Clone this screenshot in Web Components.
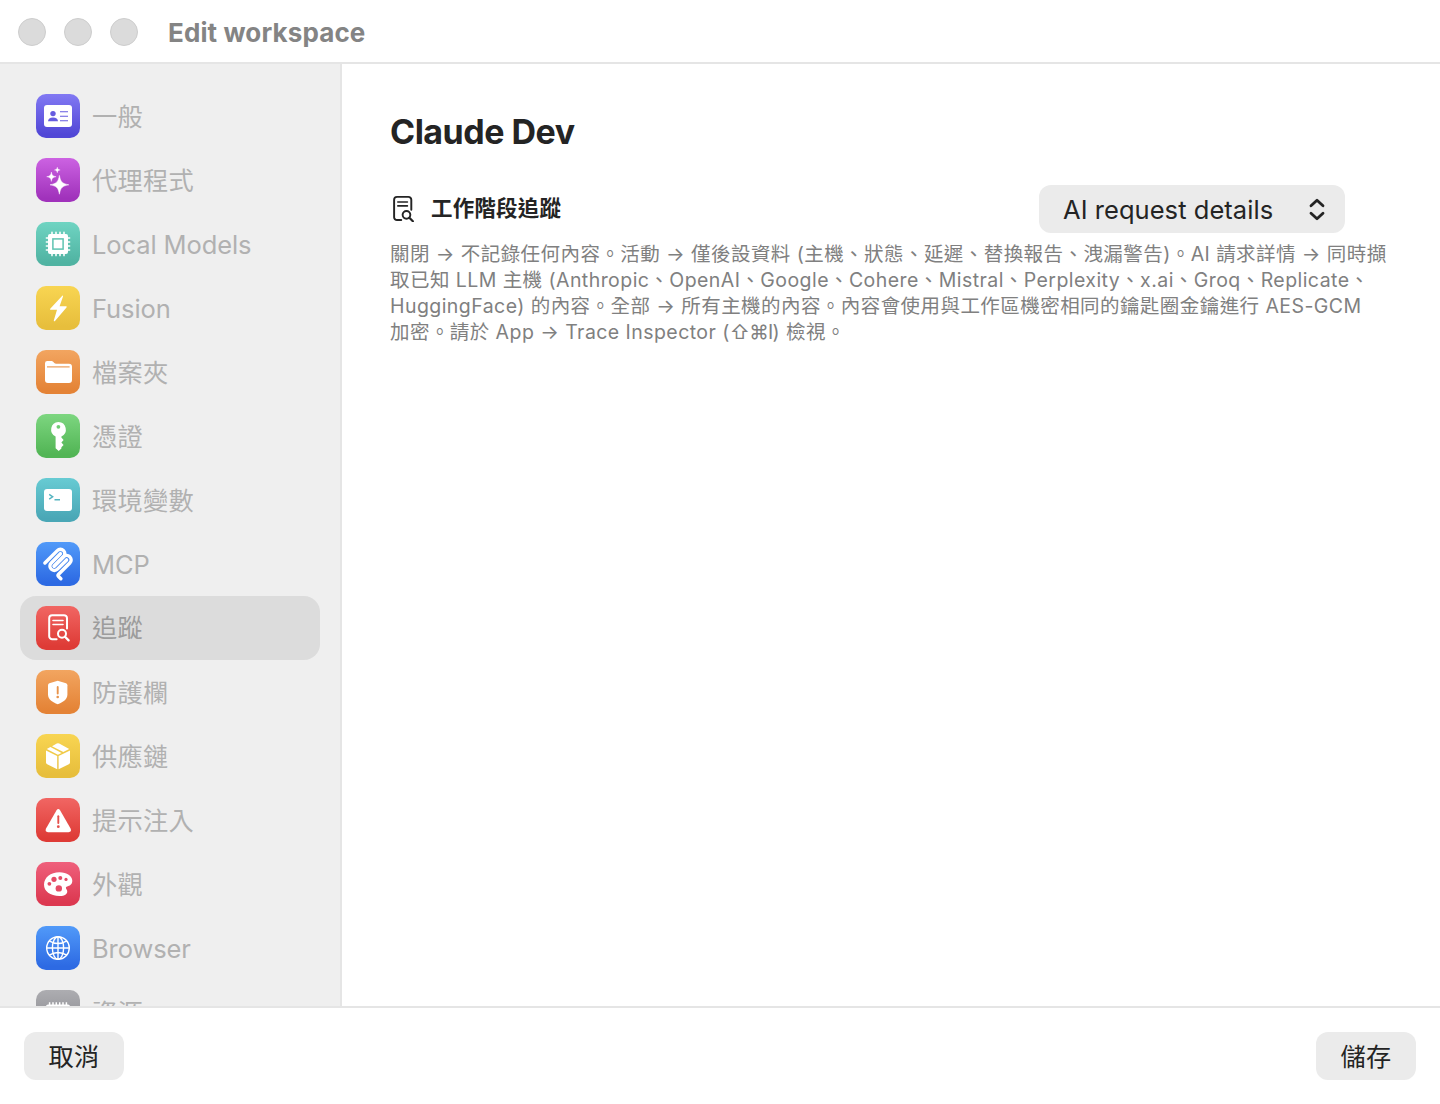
<!DOCTYPE html>
<html lang="zh-Hant">
<head>
<meta charset="utf-8">
<title>Edit workspace</title>
<style>
	html, body { margin: 0; height: 100%; }
	body {
		font-family: Inter, "Noto Sans CJK TC", sans-serif;
		background: #fff;
		overflow: hidden;
	}
	.keys { letter-spacing: -0.7px; }
</style>
</head>
<body>
<workspace-window caption="Edit workspace">
	<side-item slot="nav" icon="card" tint="indigo" cjk>一般</side-item>
	<side-item slot="nav" icon="sparkles" tint="purple" cjk>代理程式</side-item>
	<side-item slot="nav" icon="chip" tint="teal">Local Models</side-item>
	<side-item slot="nav" icon="bolt" tint="yellow">Fusion</side-item>
	<side-item slot="nav" icon="folder" tint="orange" cjk>檔案夾</side-item>
	<side-item slot="nav" icon="key" tint="green" cjk>憑證</side-item>
	<side-item slot="nav" icon="terminal" tint="cyan" cjk>環境變數</side-item>
	<side-item slot="nav" icon="mcp" tint="blue">MCP</side-item>
	<side-item slot="nav" icon="trace" tint="red" cjk selected>追蹤</side-item>
	<side-item slot="nav" icon="shield" tint="orange" cjk>防護欄</side-item>
	<side-item slot="nav" icon="box" tint="yellow" cjk>供應鏈</side-item>
	<side-item slot="nav" icon="warning" tint="red" cjk>提示注入</side-item>
	<side-item slot="nav" icon="palette" tint="pink" cjk>外觀</side-item>
	<side-item slot="nav" icon="globe" tint="blue">Browser</side-item>
	<side-item slot="nav" icon="memory" tint="gray" cjk>資源</side-item>

	<trace-pane name="Claude Dev">
		<span slot="title">工作階段追蹤</span>
		<popup-button slot="control">AI request details</popup-button>
		<help-line>關閉 → 不記錄任何內容。活動 → 僅後設資料 (主機、狀態、延遲、替換報告、洩漏警告)。AI 請求詳情 → 同時擷</help-line>
		<help-line>取已知 LLM 主機 (Anthropic、OpenAI、Google、Cohere、Mistral、Perplexity、x.ai、Groq、Replicate、</help-line>
		<help-line>HuggingFace) 的內容。全部 → 所有主機的內容。內容會使用與工作區機密相同的鑰匙圈金鑰進行 AES-GCM</help-line>
		<help-line>加密。請於 App → Trace Inspector (<span class="keys">⇧⌘I</span>) 檢視。</help-line>
	</trace-pane>

	<push-button slot="footer">取消</push-button>
	<push-button slot="footer">儲存</push-button>
</workspace-window>

<script>
// Glyphs are drawn on the 44px tile; "var(--hole)" is the tile colour showing through.
const TRACE = `
	<g fill="none" stroke="currentColor" stroke-width="2" stroke-linecap="round" stroke-linejoin="round">
		<path d="M20.6 33.2H16.2a3 3 0 0 1-3-3V12.2a3 3 0 0 1 3-3H28a3 3 0 0 1 3 3V22.6"/>
		<path d="M17 14.5H27M17 18.5H27" stroke-width="1.6"/>
		<circle cx="26" cy="27.8" r="4"/>
		<path d="M29 30.8L32.6 34.4" stroke-width="2.3"/>
	</g>`;

const ICONS = {
	card: `
		<rect x="8" y="11" width="28" height="22" rx="3"/>
		<g fill="var(--hole)">
			<circle cx="17" cy="19.6" r="2.7"/>
			<path d="M12 27.2C12 24.7 14 23.4 17 23.4S22 24.7 22 27.2Z"/>
			<path d="M24 17.2h8v1h-8zM24 21.7h8v1h-8zM24 26.2h8v1h-8z"/>
		</g>`,
	sparkles: `
		<path d="M23.4 17.4C24.6 24 26.2 25.5 32.8 26.8C26.2 28.1 24.6 29.6 23.4 36.2C22.2 29.6 20.6 28.1 14 26.8C20.6 25.5 22.2 24 23.4 17.4Z" stroke="#fff" stroke-width=".5"/>
		<path d="M15.4 14C15.9 17.2 16.7 18.1 20.1 18.7C16.7 19.3 15.9 20.2 15.4 23.4C14.9 20.2 14.1 19.3 10.7 18.7C14.1 18.1 14.9 17.2 15.4 14Z" stroke="#fff" stroke-width=".4"/>
		<path d="M21.3 9.1C21.6 11 22.1 11.6 24.2 12C22.1 12.4 21.6 13 21.3 14.9C21 13 20.5 12.4 18.4 12C20.5 11.6 21 11 21.3 9.1Z" stroke="#fff" stroke-width=".3"/>`,
	chip: `
		<rect x="12" y="12" width="20" height="20" rx="2"/>
		<path d="M16 10.4v23.2M20 10.4v23.2M24 10.4v23.2M28 10.4v23.2M10.4 16h23.2M10.4 20h23.2M10.4 24h23.2M10.4 28h23.2" stroke="#fff" stroke-width="1.6" stroke-linecap="round"/>
		<rect x="16.9" y="16.9" width="10.2" height="10.2" fill="#fff" stroke="var(--hole)" stroke-width="1.5"/>`,
	bolt: `<path d="M26.3 9.8L14.2 22.8Q13.6 23.7 14.6 23.7H21L17.8 34.4Q17.8 36 19.2 34.8L30.5 21.4Q31.2 20.2 30 20.2H23.6L27 10.6Q27.2 9.2 26.3 9.8Z"/>`,
	folder: `
		<path d="M9 14V13.2A2.2 2.2 0 0 1 11.2 11H15.4C17.4 11 17.8 13.7 20 13.7H33A3 3 0 0 1 36 16.7V30A3 3 0 0 1 33 33H12A3 3 0 0 1 9 30Z"/>
		<path d="M11 16.9H33.6" stroke="var(--hole)" stroke-width="1.1"/>`,
	key: `
		<path fill-rule="evenodd" d="M22.4 7.9A7.6 7.6 0 0 1 25.4 22.4V23.6L27.6 26.1L25.4 28.6L27.6 31L25.4 33.2V34.4L22.7 37L19.6 34.2V22.4A7.6 7.6 0 0 1 22.4 7.9ZM22.4 10.9A1.9 1.9 0 1 0 22.4 14.7A1.9 1.9 0 1 0 22.4 10.9Z"/>`,
	terminal: `
		<rect x="8" y="11" width="28" height="22" rx="3"/>
		<path d="M13.2 16.4L16.7 18.8L13.2 21.2M18.5 21.8H24" fill="none" stroke="var(--hole)" stroke-width="1.4"/>`,
	mcp: `
		<g transform="translate(5.6 5.5) scale(.183)" fill="none" stroke="#fff" stroke-width="19" stroke-linecap="round">
			<path d="M18 84.85L85.88 16.97C95.25 7.6 110.45 7.6 119.82 16.97C129.2 26.34 129.2 41.54 119.82 50.91L68.56 102.18"/>
			<path d="M69.27 101.47L119.82 50.91C129.2 41.54 144.39 41.54 153.77 50.91L154.12 51.27C163.49 60.64 163.49 75.83 154.12 85.21L92.72 146.6C89.6 149.72 89.6 154.79 92.72 157.91L105.33 170.52"/>
			<path d="M102.85 33.94L52.65 84.15C43.28 93.52 43.28 108.71 52.65 118.09C62.02 127.46 77.22 127.46 86.59 118.09L136.79 67.88"/>
		</g>`,
	trace: TRACE,
	shield: `
		<path d="M21.7 10.7L30 13.3Q31.4 13.8 31.4 15.2V24.6C31.4 29.5 27 32.2 21.7 34.3C16.4 32.2 12 29.5 12 24.6V15.2Q12 13.8 13.4 13.3Z"/>
		<path d="M21.7 17V23.6" stroke="var(--hole)" stroke-width="1.9" stroke-linecap="round"/>
		<circle cx="21.7" cy="27" r="1.3" fill="var(--hole)"/>`,
	box: `
		<path d="M10 16.6L21.2 22V35.3L11.2 30.3Q10 29.6 10 28.4ZM34 16.6L22.6 22V35.3L32.8 30.3Q34 29.6 34 28.4Z"/>
		<path d="M10.8 15L14.4 13.1L25.6 18.9L21.9 20.8ZM16 12.2L20.8 9.6Q22 9 23.2 9.6L33.2 15L27.3 18.1Z"/>`,
	warning: `
		<path d="M20.4 12.4Q22.3 9.8 24.2 12.4L34.7 30.8Q35.8 34 32.6 34.2H12Q8.8 34 9.9 30.8Z"/>
		<path d="M22.3 18.2V25" stroke="var(--hole)" stroke-width="1.9" stroke-linecap="round"/>
		<circle cx="22.3" cy="28.7" r="1.4" fill="var(--hole)"/>`,
	palette: `
		<path d="M23.5 10.3C31 10.3 36.3 14 36.3 18.8C36.3 22.6 33.6 24 31 24.4C29.6 24.7 29.6 26 30.6 27.4C32.4 30 30.8 34 23.5 34C14 34 8 29.4 8 22.6C8 15.6 14.5 10.3 23.5 10.3Z"/>
		<g fill="var(--hole)">
			<circle cx="18" cy="17.3" r="2.6"/><circle cx="24.3" cy="16" r="2"/><circle cx="30" cy="17.4" r="1.6"/>
			<circle cx="13.4" cy="21.8" r="1.9"/><circle cx="22.8" cy="26.4" r="3.2"/>
		</g>`,
	globe: `
		<g fill="none" stroke="#fff" stroke-width="1.4">
			<circle cx="22" cy="22" r="11.3"/>
			<ellipse cx="22" cy="22" rx="5.6" ry="11.3"/>
			<path d="M22 10.6V33.4M10.6 22H33.4M13.2 14.8Q22 20.2 30.8 14.8M13.2 29.2Q22 23.8 30.8 29.2"/>
		</g>`,
	memory: `
		<rect x="10" y="14.4" width="24" height="15" rx="2"/>
		<path d="M13.6 12.3v4M17 12.3v4M20.3 12.3v4M23.7 12.3v4M27 12.3v4M30.4 12.3v4" stroke="#fff" stroke-width="1.5"/>`
};

// top colour, bottom colour, colour behind the glyph cutouts
const TINTS = {
	indigo: ['#8279f3', '#5147d6', '#665cdf'],
	purple: ['#cc62e2', '#a032bb', '#b548cc'],
	teal:   ['#6fd4c2', '#50b3a2', '#5fc3b1'],
	yellow: ['#f8d552', '#e7be3c', '#f0c947'],
	orange: ['#f2a560', '#e48336', '#e8934b'],
	green:  ['#7dd680', '#52b555', '#66c569'],
	cyan:   ['#67cbd3', '#4aa7b6', '#55b4c0'],
	blue:   ['#519af9', '#2d6ae3', '#3f82ee'],
	red:    ['#f16663', '#de3b36', '#e5504c'],
	pink:   ['#ef607c', '#dc3850', '#e54c66'],
	gray:   ['#adadb1', '#88888d', '#9a9a9e']
};

class SideItem extends HTMLElement {
	constructor() {
		super();
		this.attachShadow({mode: 'open'});
	}
	connectedCallback() {
		const [top, bottom, hole] = TINTS[this.getAttribute('tint')];
		this.shadowRoot.innerHTML = `
			<style>
				:host {
					display: flex;
					flex: none;
					align-items: center;
					gap: 12px;
					height: 64px;
					padding: 0 16px;
					box-sizing: border-box;
					border-radius: 16px;
					color: #b1b1b1;
					font-size: 25.5px;
					letter-spacing: -0.1px;
					white-space: nowrap;
				}
				:host([cjk]) {
					font-size: 25.2px;
					letter-spacing: 0.35px;
				}
				:host([selected]) {
					background: #dcdcdc;
					color: #9c9c9c;
				}
				.tile {
					--hole: ${hole};
					flex: none;
					width: 44px;
					height: 44px;
					border-radius: 10px;
					color: #fff;
					background: linear-gradient(${top}, ${bottom} 92%);
				}
				svg { display: block; fill: #fff; }
				.label { line-height: 32px; padding-top: 2px; }
				:host([selected]) .label { padding-top: 0; }
			</style>
			<div class="tile"><svg width="44" height="44" viewBox="0 0 44 44">${ICONS[this.getAttribute('icon')]}</svg></div>
			<div class="label"><slot></slot></div>
		`;
	}
}

class PushButton extends HTMLElement {
	constructor() {
		super();
		this.attachShadow({mode: 'open'}).innerHTML = `
			<style>
				:host {
					display: flex;
					align-items: center;
					justify-content: center;
					width: 100px;
					height: 48px;
					border-radius: 12px;
					background: #ebebeb;
					color: #242424;
					font-size: 25.2px;
					letter-spacing: 0.35px;
				}
				span { line-height: 32px; padding-top: 2px; }
			</style>
			<span><slot></slot></span>
		`;
	}
}

class PopupButton extends HTMLElement {
	constructor() {
		super();
		this.attachShadow({mode: 'open'}).innerHTML = `
			<style>
				:host {
					display: flex;
					align-items: center;
					justify-content: space-between;
					width: 306px;
					height: 48px;
					padding: 0 18px 0 24px;
					box-sizing: border-box;
					border-radius: 12px;
					background: #ebebeb;
					color: #242424;
					font-size: 25.5px;
					letter-spacing: 0.05px;
					white-space: nowrap;
				}
				span { line-height: 32px; padding-top: 2px; }
			</style>
			<span><slot></slot></span>
			<svg width="20" height="28" viewBox="0 0 20 28" fill="none" stroke="currentColor" stroke-width="2.8" stroke-linecap="round" stroke-linejoin="round">
				<path d="M4 10.8L10 5.2L16 10.8M4 18.2L10 23.8L16 18.2"/>
			</svg>
		`;
	}
}

class HelpLine extends HTMLElement {
	constructor() {
		super();
		this.attachShadow({mode: 'open'}).innerHTML = `
			<style>
				:host {
					display: block;
					height: 26px;
					line-height: 26px;
					color: #808080;
					font-size: 19.5px;
					letter-spacing: 0.44px;
					white-space: nowrap;
				}
			</style>
			<slot></slot>
		`;
	}
}

class TracePane extends HTMLElement {
	constructor() {
		super();
		this.attachShadow({mode: 'open'}).innerHTML = `
			<style>
				:host {
					display: block;
					padding: 44px 48px 0;
					color: #242424;
				}
				h1 {
					margin: 0;
					font-size: 34px;
					font-weight: 700;
					line-height: 48px;
					letter-spacing: -0.5px;
				}
				.row {
					display: flex;
					align-items: center;
					height: 48px;
					margin: 29px 47px 8px 0;
				}
				.title {
					flex: 1;
					padding: 0 0 6px 15px;
					font-size: 21.5px;
					font-weight: 700;
					letter-spacing: 0.2px;
				}
				svg { flex: none; margin-bottom: 2px; }
			</style>
			<h1></h1>
			<div class="row">
				<svg width="26" height="28" viewBox="9.4 6.2 26 29">${TRACE}</svg>
				<div class="title"><slot name="title"></slot></div>
				<slot name="control"></slot>
			</div>
			<slot></slot>
		`;
	}
	connectedCallback() {
		this.shadowRoot.querySelector('h1').textContent = this.getAttribute('name');
	}
}

class WorkspaceWindow extends HTMLElement {
	constructor() {
		super();
		this.attachShadow({mode: 'open'}).innerHTML = `
			<style>
				:host {
					display: flex;
					flex-direction: column;
					height: 100vh;
				}
				header {
					display: flex;
					flex: none;
					align-items: center;
					gap: 18px;
					height: 64px;
					padding: 2px 0 0 18px;
					box-sizing: border-box;
					border-bottom: 2px solid #e5e5e5;
				}
				i {
					width: 28px;
					height: 28px;
					box-sizing: border-box;
					border: 1px solid #cdcdcd;
					border-radius: 50%;
					background: #dbdbdb;
				}
				.caption {
					margin-left: 12px;
					color: #848484;
					font-size: 26px;
					font-weight: 700;
					letter-spacing: 0.12px;
				}
				.body {
					display: flex;
					flex: 1;
					min-height: 0;
				}
				nav {
					display: flex;
					flex: none;
					flex-direction: column;
					width: 342px;
					padding: 20px 20px 0;
					box-sizing: border-box;
					border-right: 2px solid #e5e5e5;
					background: #efefef;
					overflow: hidden;
				}
				main { flex: 1; min-width: 0; }
				footer {
					display: flex;
					flex: none;
					align-items: center;
					justify-content: space-between;
					height: 98px;
					padding: 0 24px;
					box-sizing: border-box;
					border-top: 2px solid #e5e5e5;
				}
			</style>
			<header><i></i><i></i><i></i><div class="caption"></div></header>
			<div class="body">
				<nav><slot name="nav"></slot></nav>
				<main><slot></slot></main>
			</div>
			<footer><slot name="footer"></slot></footer>
		`;
	}
	connectedCallback() {
		this.shadowRoot.querySelector('.caption').textContent = this.getAttribute('caption');
	}
}

customElements.define('side-item', SideItem);
customElements.define('push-button', PushButton);
customElements.define('popup-button', PopupButton);
customElements.define('help-line', HelpLine);
customElements.define('trace-pane', TracePane);
customElements.define('workspace-window', WorkspaceWindow);
</script>
</body>
</html>
